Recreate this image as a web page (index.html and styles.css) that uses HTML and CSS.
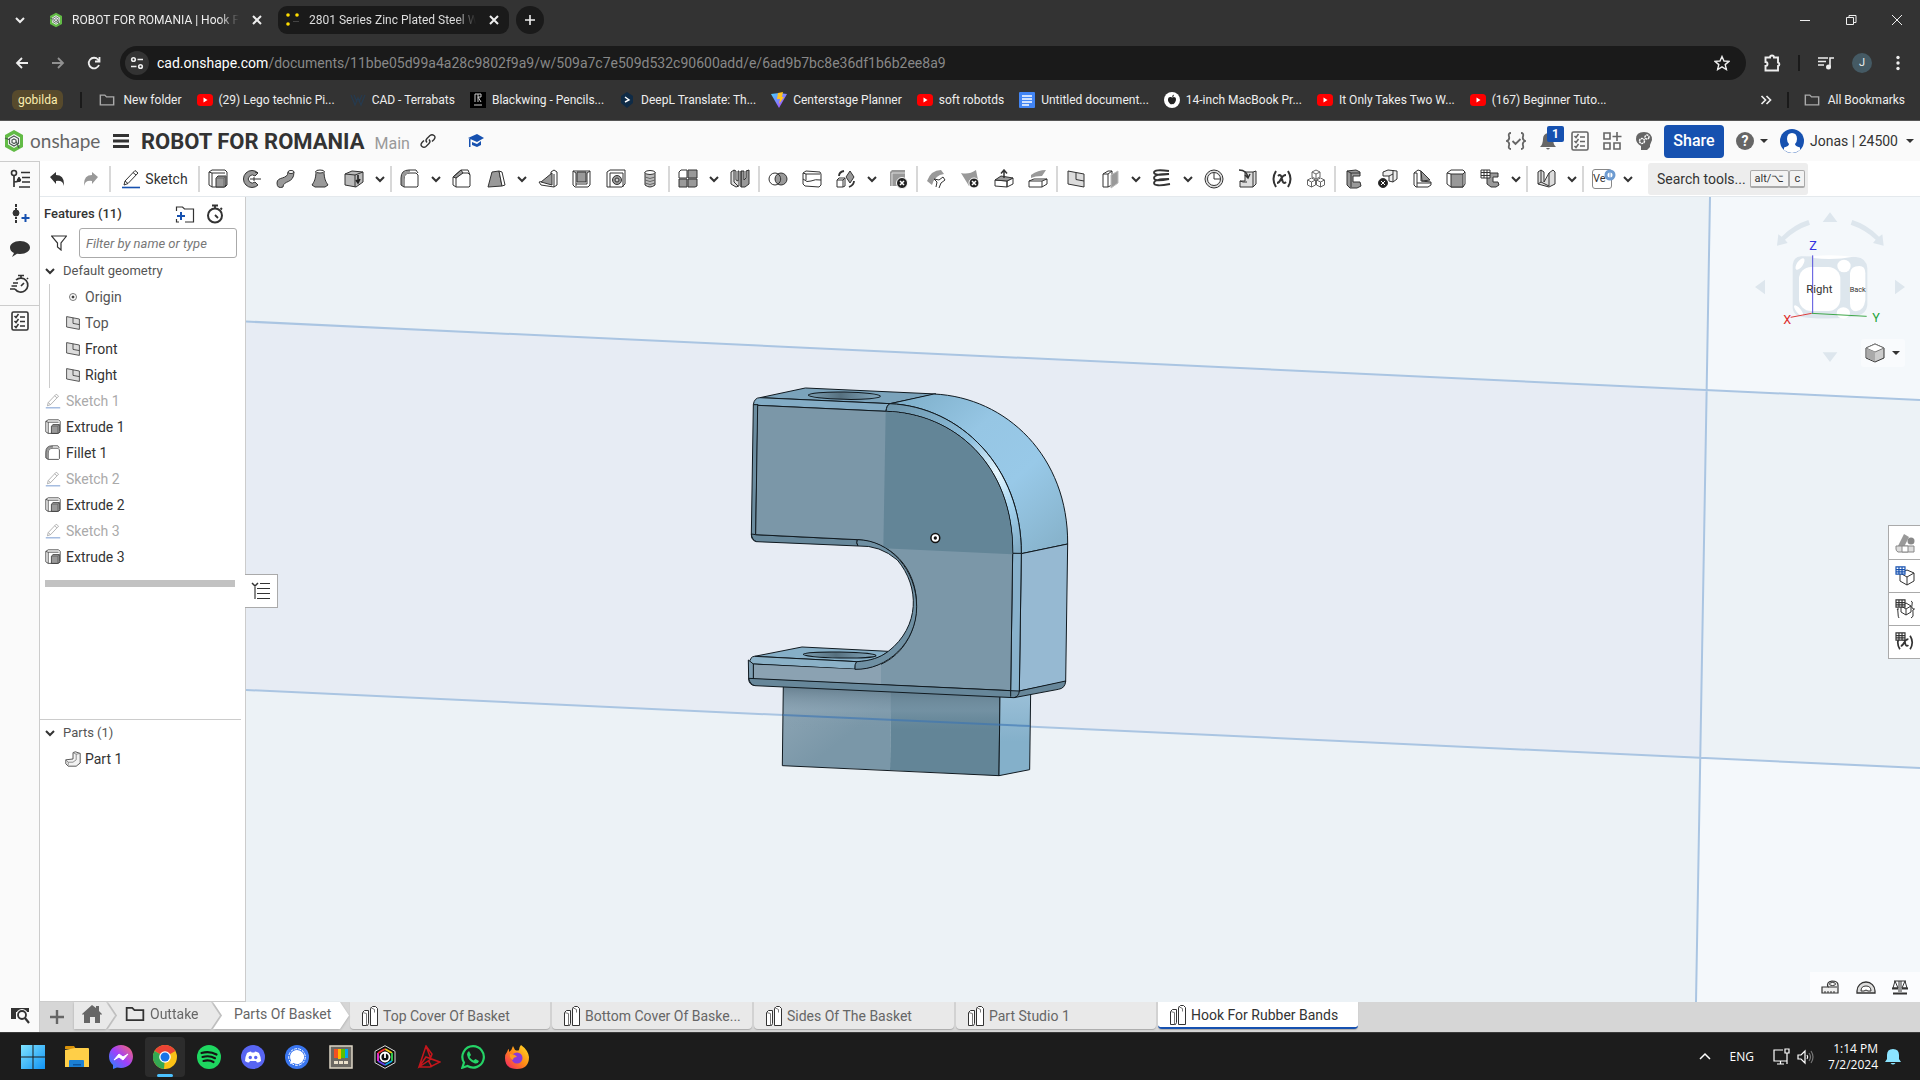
FILE: index.html
```html
<!DOCTYPE html>
<html lang="en">
<head>
<meta charset="utf-8">
<title>ROBOT FOR ROMANIA | Hook For Rubber Bands</title>
<link rel="stylesheet" href="styles.css">
</head>
<body>
<svg class="defs" aria-hidden="true">
  <defs>
    <linearGradient id="gWin" x1="0" y1="0" x2="1" y2="1"><stop offset="0" stop-color="#7fe3ff"/><stop offset="1" stop-color="#1093f5"/></linearGradient>
    <linearGradient id="gMsg" x1="0" y1="1" x2="1" y2="0"><stop offset="0" stop-color="#1a8cff"/><stop offset=".5" stop-color="#a040fa"/><stop offset="1" stop-color="#ff6a68"/></linearGradient>
    <linearGradient id="gFox" x1="1" y1="0" x2="0" y2="1"><stop offset="0" stop-color="#ffe226"/><stop offset=".5" stop-color="#ff8a16"/><stop offset="1" stop-color="#f3186e"/></linearGradient>
    <linearGradient id="gVite" x1="0" y1="0" x2="1" y2="1"><stop offset="0" stop-color="#41d1ff"/><stop offset="1" stop-color="#bd34fe"/></linearGradient>
  </defs>
  <symbol id="chev" viewBox="0 0 12 12"><path d="M2 4l4 4 4-4" fill="none" stroke-width="2"/></symbol>
  <symbol id="tri" viewBox="0 0 12 12"><path d="M2 4h8l-4 4z" fill="#333" stroke="none"/></symbol>
  <symbol id="x" viewBox="0 0 12 12"><path d="M2 2l8 8M10 2l-8 8" stroke-width="2"/></symbol>
  <symbol id="onshape" viewBox="0 0 20 24"><path d="M10 1l9 5v12l-9 5-9-5V6z" fill="#62bb46" stroke="none"/><path d="M10 5l6 3.500v7L10 19l-6-3.500v-7z" fill="#fafafa" stroke="none"/><path d="M10 7l4.500 2.500v5L10 17l-4.500-2.500v-5zM10 10l2 1v2.500l-2 1-2-1V11zM1 9l5 2M12 12l3 7" fill="none" stroke="#4d5a52" stroke-width="1.200"/></symbol>
  <symbol id="folder" viewBox="0 0 18 16"><path d="M1.500 2.500h5l2 2h8v9h-15z" stroke-width="1.600" fill="none"/></symbol>
  <symbol id="yt" viewBox="0 0 16 16"><rect y="2" width="16" height="12" rx="3.500" fill="#f00" stroke="none"/><path d="M6.500 5.500v5l4-2.500z" fill="#fff" stroke="none"/></symbol>
  <symbol id="plane" viewBox="0 0 20 20"><path d="M2 2l16 3v13L2 15z" fill="#dcdcdc"/><path d="M10 3.500v7l8 1.500" fill="none"/></symbol>
  <symbol id="extrude" viewBox="0 0 20 20"><path d="M1 3l3-2h13l2 2v13l-2 2H4l-3-2z" fill="#fff"/><path d="M4 18V4h13M1 3l3 1" fill="none"/><path class="g" d="M8 9l2-2h8v9l-2 2H8z"/><path d="M8 9h8v9M16 9l2-2" fill="none" stroke="#666"/></symbol>
  <symbol id="fillet" viewBox="0 0 20 20"><path d="M4 18V10q0-6 6-6h6l2 2v11l-1 1z" fill="#fff"/><path class="g" d="M1 16V9q0-7 8-8h1v3q-6 0-6 6v8z" stroke="none"/><path d="M4 18l-3-2V9q0-8 8-8h7l2 3" fill="none"/></symbol>
  <symbol id="pencil" viewBox="0 0 20 20"><path d="M4 12L14 1.500l3 2.500L7 14.500l-4 1.500zM4 12l3 2.500M12 3.500l3 2.500" fill="none"/><path d="M1 18.500h18" stroke="#1651b0" stroke-width="1.600"/></symbol>
  <symbol id="revolve" viewBox="0 0 20 20"><path class="g" d="M16 4A8.500 8.500 0 1 0 16 16l-3-3a4 4 0 1 1 0-6z"/><path d="M13 7l3-3-3-1M8 10h11M12 8v4" fill="none"/></symbol>
  <symbol id="sweep" viewBox="0 0 20 20"><path class="g" d="M1 14c0-7 11-3 11-11h6c0 12-11 8-11 15q-6 2-6-4z"/><ellipse cx="15" cy="3" rx="3" ry="1.500" fill="#fff"/></symbol>
  <symbol id="loft" viewBox="0 0 20 20"><path class="g" d="M6 2h8c0 8 2 11 4 14l-3 2H5l-3-2c2-3 4-6 4-14z"/><ellipse cx="10" cy="2.500" rx="4" ry="1.500" fill="#fff"/></symbol>
  <symbol id="thicken" viewBox="0 0 20 20"><path d="M1 5l7-3 11 1v10l-7 5-11-2z" fill="#bbb"/><path d="M1 5l10 1 8-3M11 6v12" fill="none"/><path d="M14 6v8m-2-3l2 3 2-4" stroke="#222" stroke-width="1.600" fill="none"/></symbol>
  <symbol id="chamfer" viewBox="0 0 20 20"><path d="M4 18v-9l6-5h6l2 2v11l-1 1z" fill="#fff"/><path class="g" d="M1 8l8-7 2 3-7 5z"/><path d="M4 18l-3-2V8l8-7h7l2 5" fill="none"/></symbol>
  <symbol id="draft" viewBox="0 0 20 20"><path class="g" d="M6 3l7-1 3 15-14 1z"/><path d="M13 2l3 1 3 13-3 1z" fill="#fff"/></symbol>
  <symbol id="rib" viewBox="0 0 20 20"><path d="M13 3l3-2 3 2v13l-3 2-13-2-2-3 12-2z" fill="#fff"/><path class="g" d="M3 13L14 4v12z"/><path d="M16 18V5" fill="none"/></symbol>
  <symbol id="shell" viewBox="0 0 20 20"><path d="M1 2h17v14l-2 2H3l-2-2z" fill="#fff"/><path class="g" d="M5 3h9v10H5z"/><path d="M1 2l3 2v13M18 2l-3 2v11H4" fill="none"/></symbol>
  <symbol id="hole" viewBox="0 0 20 20"><path d="M1 3l3-2h15v14l-3 3H1z" fill="#fff"/><path d="M4 4h13v14M4 4v14" fill="none"/><circle class="g" cx="11" cy="11" r="4.500"/><circle cx="11" cy="11" r="2" fill="#ccc"/></symbol>
  <symbol id="thread" viewBox="0 0 20 20"><path d="M5 3v13q5 4 10 0V3z" fill="#bbb"/><ellipse cx="10" cy="3.500" rx="5" ry="2" fill="#fff"/><path d="M5 8q5 3 10 0M5 11q5 3 10 0M5 14q5 3 10 0" fill="none" stroke="#666"/></symbol>
  <symbol id="pattern" viewBox="0 0 20 20"><path d="M1 3l2-2h6v8H1z" fill="#fff"/><path class="g" d="M10 1h9v8h-9zM1 10h8v8H1zM10 10h9v7l-2 1h-7z"/></symbol>
  <symbol id="mirror" viewBox="0 0 20 20"><path d="M1 3l3-2 2 1v9l2 1V2h1v15l-3 1-5-3z" fill="#ddd"/><path class="g" d="M11 2h3v9l2-2V2l3-1v14l-4 3h-4z"/><path d="M4 1v12l4 4M11 2v16" fill="none"/></symbol>
  <symbol id="boolean" viewBox="0 0 20 20"><circle cx="7" cy="10" r="6" fill="#fff"/><circle class="g" cx="13" cy="10" r="6"/><path d="M10 5a6 6 0 0 1 0 10" fill="none"/></symbol>
  <symbol id="split" viewBox="0 0 20 20"><path d="M1 4l3-2 14 1 1 2v11l-2 2-14-1-2-2z" fill="#fff"/><path d="M1 4l3 1 14 0M1 10q4 4 8 2t10-1M4 5v6" fill="none"/></symbol>
  <symbol id="transform" viewBox="0 0 20 20"><path d="M1 11l2-2h6v8l-2 1H1zM1 11h6v7M7 11l2-2" fill="#fff"/><path class="g" d="M14 2l4 6-4 6-4-6z"/><path d="M3 7q0-4 5-5M18 12q0 4-5 6" fill="none" stroke-width="1.800"/></symbol>
  <symbol id="delpart" viewBox="0 0 20 20"><path class="g" d="M2 3l2-2h13v14l-2 2H2z" stroke="none"/><path d="M4 17V4h13" stroke="#ddd" fill="none"/><circle cx="14" cy="14" r="5.500" fill="#222" stroke="#fff"/><path d="M12 12l4 4M16 12l-4 4" stroke="#fff" stroke-width="1.500"/></symbol>
  <symbol id="modfil" viewBox="0 0 20 20"><path class="g" d="M1 12q4-11 14-11l3 4Q9 6 6 16z" stroke="none"/><path d="M8 10l5 1 4-3 2 3-4 3-2 5M8 10l3 3-1 5" fill="#fff"/></symbol>
  <symbol id="delface" viewBox="0 0 20 20"><path class="g" d="M1 4q8 2 15-3l2 10-9 6z" stroke="none"/><circle cx="14" cy="14" r="5" fill="#222" stroke="#fff"/><path d="M12 12l4 4M16 12l-4 4" stroke="#fff" stroke-width="1.500"/></symbol>
  <symbol id="moveface" viewBox="0 0 20 20"><path d="M1 11v6l12 1 6-3v-6L13 12z" fill="#fff"/><path class="g" d="M1 11l6-4 12 2-6 3z"/><path d="M13 12v6M10 9V2M7 4.500L10 1l3 3.500" fill="none" stroke-width="1.500"/></symbol>
  <symbol id="replface" viewBox="0 0 20 20"><path class="g" d="M3 6q7-5 15-5l-4 6q-7 0-11 2z" stroke="none"/><path d="M1 12l5-2h13v5l-5 3H1zM1 12h13l5-2M14 12v6" fill="#fff"/></symbol>
  <symbol id="surface" viewBox="0 0 20 20"><path d="M3 5l5-3h4v14l-4 2H3z" fill="#fff"/><path d="M3 5h5v13M8 5l4-3" fill="none"/><path class="g" d="M11 6l7-4v12l-7 5z" stroke="#bbb"/></symbol>
  <symbol id="helix" viewBox="0 0 20 20"><path d="M17 2Q2 0 2 3.500T17 5Q2 5 2 9t15 1Q2 10 2 14t16 1" fill="none" stroke-width="1.800"/></symbol>
  <symbol id="variable" viewBox="0 0 20 20"><path d="M4 2q-5 8 0 16M16 2q5 8 0 16M6 7q3-3 4 3t4 3M14 6q-3 0-5 4t-4 4" fill="none" stroke-width="2"/></symbol>
  <symbol id="clock" viewBox="0 0 20 20"><circle cx="10" cy="10" r="9" fill="#ddd"/><circle cx="10" cy="10" r="6.500" fill="#fff"/><path d="M10 4v6h6" fill="none"/></symbol>
  <symbol id="derived" viewBox="0 0 20 20"><path d="M7 3h8l3-1v13l-3 3H2v-6h5z" fill="#ddd"/><path d="M15 3v15M2 12l3 1h4" fill="none"/><path d="M1 1q8 0 9 8M7 6l3 3 2-4" fill="none" stroke-width="1.500"/></symbol>
  <symbol id="composite" viewBox="0 0 20 20"><path d="M10 1l4 2v5l-4 2-4-2V3zM5.500 9l4 2v5l-4 2-4-2v-5zM14.500 9l4 2v5l-4 2-4-2v-5zM6 3l4 2 4-2M10 5v5M1.500 11l4 2 4-2 1 0 4 2 4-2M5.500 13v5M14.500 13v5" fill="#fff" stroke="#666"/></symbol>
  <symbol id="frame" viewBox="0 0 20 20"><path class="g" d="M3 2l9-1 4 2v4H9v6h7l1 4-4 2H6l-3-3z"/><path d="M3 2l4 2h9M7 4v14" fill="none"/></symbol>
  <symbol id="trim" viewBox="0 0 20 20"><path d="M5 3l5-2 9 1v8l-4 3-4-1v-5H5z" fill="#eee"/><path d="M11 7l4-2V1M15 5v8" fill="none"/><circle cx="5" cy="14" r="4.500" fill="#222"/><path d="M3 12l4 4M7 12l-4 4" stroke="#fff"/></symbol>
  <symbol id="gusset" viewBox="0 0 20 20"><path d="M2 4l4-3 3 1v10l10 1v3l-3 2H4l-2-2z" fill="#fff"/><path class="g" d="M9 2l9 9-8 1z"/><path d="M5 18V4L2 4M5 14h14" fill="none"/></symbol>
  <symbol id="block" viewBox="0 0 20 20"><path d="M1 4l4-3h12l2 2v12l-2 3H5l-4-3z" fill="#fff"/><path class="g" d="M5 5h12v13H5z"/><path d="M1 4l4 1M17 5l2-2" fill="none"/></symbol>
  <symbol id="cutlist" viewBox="0 0 20 20"><path class="g" d="M7 4h11v4h-5v5h5l1 3-3 2h-5l-4-3z"/><path d="M1 1h9v8H1zM1 3.500h9M1 6.500h9M4 1v8M7 1v8" fill="#fff"/></symbol>
  <symbol id="sheet" viewBox="0 0 20 20"><path d="M2 3l3-2 3 2v10l5-9 4-3 2 2v12l-6 3-11-3z" fill="#ddd"/><path d="M5 1v12l8 4V4M5 13l-3 2" fill="none"/></symbol>
  <symbol id="parts" viewBox="0 0 18 22"><path d="M1.500 7.500l2-2h4v13l-1 2h-5z" fill="#fff"/><path d="M9.500 3.500l2-2h3l2 2v17h-7z" fill="#fff"/><path d="M1.500 7.500l4 1v12M9.500 2.500l4 2v3" fill="none" stroke="#777"/></symbol>
  <symbol id="checklist" viewBox="0 0 20 20"><rect x="2" y="1" width="16" height="18" rx="1.500" fill="none" stroke-width="1.600"/><path d="M4.500 5l1.500 1.500L8.500 3M4.500 10l1.500 1.500L8.500 8M4.500 15l1.500 1.500L8.500 13M10 6h5M10 10.500h5M10 15h5" fill="none" stroke-width="1.500"/></symbol>
  <symbol id="stopwatch" viewBox="0 0 20 20"><circle cx="10" cy="11.500" r="7" fill="none" stroke-width="2"/><path d="M7 1.500h6M10 1.500V4M15.500 4l1.500 1.500M10 11l3 3" fill="none" stroke-width="1.800"/></symbol>
  <symbol id="grid" viewBox="0 0 12 10"><path d="M1 1h10v8H1zM1 4h10M1 6.500h10M4.300 1v8M7.700 1v8" fill="#fff" stroke-width="1.300"/></symbol>
</svg>

<header class="browser">
  <div class="tabstrip">
    <button class="plain tabsearch" aria-label="Search tabs"><svg class="s12"><use href="#chev"/></svg></button>
    <div class="btab"><svg class="s16"><use href="#onshape"/></svg><span class="bt">ROBOT FOR ROMANIA | Hook For Rubber Bands</span><button class="plain" aria-label="Close tab"><svg class="s12"><use href="#x"/></svg></button></div>
    <div class="btab dark"><svg class="s16" viewBox="0 0 16 16"><g stroke="none"><circle cx="3" cy="3" r="1.800" fill="#fd0"/><circle cx="12" cy="3" r="1.800" fill="#fd0"/><circle cx="3" cy="12" r="1.800" fill="#fd0"/><path d="M8 9h6v1H8z" fill="#444"/></g></svg><span class="bt">2801 Series Zinc Plated Steel Washer</span><button class="plain" aria-label="Close tab"><svg class="s12"><use href="#x"/></svg></button></div>
    <button class="newtab" aria-label="New tab"><svg class="s12" viewBox="0 0 12 12"><path d="M6 1v10M1 6h10" stroke-width="1.600"/></svg></button>
    <div class="winctl">
      <button class="plain" aria-label="Minimize"><svg class="s12" viewBox="0 0 12 12"><path d="M1 6.500h10"/></svg></button>
      <button class="plain" aria-label="Restore"><svg class="s12" viewBox="0 0 12 12"><path d="M1.500 3.500h7v7h-7zM4 3.500v-2h7v7H8.500" fill="none"/></svg></button>
      <button class="plain" aria-label="Close"><svg class="s12" viewBox="0 0 12 12"><path d="M1 1l10 10M11 1L1 11"/></svg></button>
    </div>
  </div>
  <div class="urlrow">
    <button class="plain nav" aria-label="Back"><svg class="s16" viewBox="0 0 16 16"><path d="M14 8H3M8 3L3 8l5 5" fill="none" stroke-width="1.800"/></svg></button>
    <button class="plain nav dim" aria-label="Forward"><svg class="s16" viewBox="0 0 16 16"><path d="M2 8h11M8 3l5 5-5 5" fill="none" stroke-width="1.800"/></svg></button>
    <button class="plain nav" aria-label="Reload"><svg class="s16" viewBox="0 0 16 16"><path d="M13 10a5.300 5.300 0 1 1-1-5.500L13.500 6M13.500 2v4.500H9" fill="none" stroke-width="1.800"/></svg></button>
    <div class="urlbar">
      <button class="site" aria-label="Site information"><svg class="s16" viewBox="0 0 16 16"><g fill="none" stroke-width="1.600"><circle cx="4.500" cy="4.500" r="1.800"/><path d="M8.500 4.500H14M2 11.500h5.500"/><circle cx="11.500" cy="11.500" r="1.800"/></g></svg></button>
      <p class="url"><b>cad.onshape.com</b>/documents/11bbe05d99a4a28c9802f9a9/w/509a7c7e509d532c90600add/e/6ad9b7bc8e36df1b6b2ee8a9</p>
      <button class="plain star" aria-label="Bookmark"><svg class="s16" viewBox="0 0 16 16"><path d="M8 1.500l2 4.500 5 .4-3.800 3.200 1.200 4.900L8 11.900l-4.400 2.600 1.200-4.900L1 6.400 6 6z" fill="none" stroke-width="1.400"/></svg></button>
    </div>
    <button class="plain" aria-label="Extensions"><svg class="s20" viewBox="0 0 20 20"><path d="M3.500 4.500H8a2 2 0 0 1 4 0h4v5a1.800 1.800 0 0 1 0 3.500v4.500h-12.500v-4.500a2 2 0 0 0 0-4z" fill="none" stroke-width="1.900"/></svg></button>
    <i class="bsep"></i>
    <button class="plain" aria-label="Media"><svg class="s16" viewBox="0 0 16 16"><path d="M0 3h10M0 6.500h8M0 10h6M12 12V3h4" fill="none" stroke-width="1.600"/><circle cx="10.500" cy="12" r="2.500" fill="#eee" stroke="none"/></svg></button>
    <button class="profile">J</button>
    <button class="plain" aria-label="Menu"><svg class="s16" viewBox="0 0 16 16"><g fill="#eee" stroke="none"><circle cx="8" cy="2.500" r="1.700"/><circle cx="8" cy="8" r="1.700"/><circle cx="8" cy="13.500" r="1.700"/></g></svg></button>
  </div>
  <nav class="bookmarks">
    <a href="#" class="group">gobilda</a><i class="bsep"></i>
    <a href="#"><svg class="s16 fold"><use href="#folder"/></svg>New folder</a>
    <a href="#"><svg class="s16"><use href="#yt"/></svg>(29) Lego technic Pi...</a>
    <a href="#"><svg class="s16" viewBox="0 0 16 16"><path d="M1 3l4 10 3-7 3 7 4-10M4 3l3 7M12 3L9 10" fill="none" stroke="#263a4e" stroke-width="1.300"/></svg>CAD - Terrabats</a>
    <a href="#"><svg class="s16" viewBox="0 0 16 16"><path d="M0 0h16v16H0z" fill="#000" stroke="none"/><path d="M5 10V2h3v8M8 2h3v3H8l3 5M4 13h8" fill="none" stroke="#ccc"/></svg>Blackwing - Pencils...</a>
    <a href="#"><svg class="s16" viewBox="0 0 16 16"><path d="M8 0l6 4v7l-6 5-6-5V4z" fill="#0f2b46" stroke="none"/><path d="M6 5l4 3-4 2" fill="none" stroke="#fff" stroke-width="1.400"/></svg>DeepL Translate: Th...</a>
    <a href="#"><svg class="s16" viewBox="0 0 16 16"><path d="M0 2l8-1 8 1-8 14z" fill="url(#gVite)" stroke="none"/><path d="M7 1l5-1-1 5h2l-5 7 1-5H6z" fill="#ffc31f" stroke="none"/></svg>Centerstage Planner</a>
    <a href="#"><svg class="s16"><use href="#yt"/></svg>soft robotds</a>
    <a href="#"><svg class="s16" viewBox="0 0 16 16"><rect width="16" height="16" rx="1" fill="#4285f4" stroke="none"/><path d="M3 4h10M3 7h10M3 10h10M3 13h7" stroke="#fff" stroke-width="1.500"/></svg>Untitled document...</a>
    <a href="#"><svg class="s16" viewBox="0 0 16 16"><circle cx="8" cy="8" r="8" fill="#fff" stroke="none"/><path d="M8 5.500c4-2 5 2 3 5s-2 1-3 1.500-1 1-3-1.500-1-7 3-5zM8 5q0-2 2-2.500Q10 5 8 5z" fill="#222" stroke="none"/></svg>14-inch MacBook Pr...</a>
    <a href="#"><svg class="s16"><use href="#yt"/></svg>It Only Takes Two W...</a>
    <a href="#"><svg class="s16"><use href="#yt"/></svg>(167) Beginner Tuto...</a>
    <button class="plain more" aria-label="More bookmarks"><svg class="s12" viewBox="0 0 12 12"><path d="M1.500 2l4 4-4 4M6.500 2l4 4-4 4" fill="none" stroke-width="1.700"/></svg></button><i class="bsep"></i>
    <a href="#"><svg class="s16 fold"><use href="#folder"/></svg>All Bookmarks</a>
  </nav>
</header>

<div class="app">
  <header class="dochead">
    <a class="logo" href="#"><svg viewBox="0 0 20 24"><use href="#onshape"/></svg>onshape</a>
    <button class="plain burger" aria-label="Main menu"><svg class="s16" viewBox="0 0 16 16"><path d="M0 2.500h16M0 8h16M0 13.500h16" stroke-width="3"/></svg></button>
    <h1>ROBOT FOR ROMANIA</h1><span class="branch">Main</span>
    <button class="plain link" aria-label="Copy link"><svg class="s16" viewBox="0 0 16 16"><path d="M7 9.500q-2-2 0-4l3-3q2-1.500 4 0t0 4L12 8.500M9 6.500q2 2 0 4l-3 3q-2 1.500-4 0t0-4L4 7.500" fill="none" stroke-width="1.400"/></svg></button>
    <button class="plain cap" aria-label="Education"><svg class="s16" viewBox="0 0 16 16"><path d="M0 5l9-4 7 4-7 4zM4 9l5 2 4-3v4l-4 2-5-2zM1 6h1.500v8H1z" fill="#1651b0" stroke="none"/></svg></button>
    <div class="headright">
      <button class="plain" aria-label="Validate"><svg class="s20" viewBox="0 0 20 20"><path d="M5 2Q2 2 3 5.500T0.500 10Q4 11 3 14.500T5 18M15 2q3 0 2 3.500t2.500 4.500Q16 11 17 14.500T15 18M6.500 10l3 3 5-5" fill="none" stroke="#666" stroke-width="1.800"/></svg></button>
      <button class="plain bell" aria-label="Notifications"><svg class="s20" viewBox="0 0 20 20"><path d="M2 16q3-3 3-8 0-5 5-6 5 1 5 6 0 5 3 8zM8 17h4q-2 3-4 0z" fill="#666" stroke="none"/></svg><em>1</em></button>
      <button class="plain gray" aria-label="Tasks"><svg class="s20"><use href="#checklist"/></svg></button>
      <button class="plain" aria-label="App store"><svg class="s20" viewBox="0 0 20 20"><path d="M2 2h6v6H2zM2 12h6v6H2zM12 12h6v6h-6zM15 1v9M10.500 5.500h9" fill="none" stroke="#666" stroke-width="1.600"/></svg></button>
      <button class="plain" aria-label="Learning"><svg class="s20" viewBox="0 0 20 20"><path d="M10 1q8 0 8 8l-2 5v2l-3 3H7v-4Q2 12 2 8q0-7 8-7z" fill="#666" stroke="none"/><g fill="none" stroke="#fff" stroke-width="1.500"><circle cx="8" cy="10" r="2.500" stroke-dasharray="2 .6"/><circle cx="13" cy="6" r="2" stroke-dasharray="2 .6"/></g></svg></button>
      <button class="share">Share</button>
      <button class="plain help" aria-label="Help"><b>?</b><svg class="s12"><use href="#tri"/></svg></button>
      <button class="plain user"><svg viewBox="0 0 24 24"><circle cx="12" cy="12" r="12" fill="#1651b0" stroke="none"/><path d="M12 4q5 0 5 6 0 3-2 5 0 2 5 3.500v2.500q-8 6-16 0V18.500Q9 17 9 15q-2-2-2-5 0-6 5-6z" fill="#fff" stroke="none"/></svg>Jonas | 24500<svg class="s12"><use href="#tri"/></svg></button>
    </div>
  </header>

  <div class="work">
    <nav class="rail">
      <button class="plain" aria-label="Feature list"><svg viewBox="0 0 20 20"><circle cx="4" cy="4" r="2.500" fill="none" stroke-width="1.600"/><path d="M4 7v11M4 13q5 0 5-3v-2M11 3.500h9M12 8.500h8M12 13h8M9 18h11" fill="none" stroke-width="1.700"/><circle cx="9" cy="11" r="1.700" fill="#333"/></svg></button>
      <button class="plain" aria-label="Insert version"><svg viewBox="0 0 20 20"><circle cx="6" cy="9" r="3" fill="#333"/><path d="M6 0v3M6 4v2M6 13v2M6 16v3" stroke-width="2"/><path d="M15.500 10v8M11.500 14h8" stroke="#1651b0" stroke-width="2"/></svg></button>
      <button class="plain" aria-label="Comments"><svg viewBox="0 0 20 20"><path d="M10 2c6 0 10 3 10 6.500S16 15 10 15l-3-.3L2 18l2-4Q0 12 0 8.500C0 5 4 2 10 2z" fill="#333" stroke="none"/></svg></button>
      <button class="plain" aria-label="History"><svg viewBox="0 0 20 20"><path d="M6 6a7 7 0 1 1-1 9M8 1.500h6M11 1.500V4M17 4l1 1M11 12l3-3M3 9h5M1.500 12H7M0 15h5" fill="none" stroke-width="1.700"/></svg></button>
      <hr>
      <button class="plain" aria-label="Tasks"><svg viewBox="0 0 20 20"><use href="#checklist"/></svg></button>
      <button class="plain find" aria-label="Find tab"><svg viewBox="0 0 20 20"><path d="M1 3h18v4H1zM1 3h5v11H1z" fill="#333" stroke="none"/><circle cx="12" cy="10" r="6" fill="#fafafa" stroke="none"/><circle cx="12" cy="10" r="4" fill="none" stroke-width="1.800"/><path d="M15 13l4 5" stroke-width="2.200"/></svg></button>
    </nav>

    <div class="studio">
      <div class="toolbar">
        <button aria-label="Undo"><svg viewBox="0 0 20 20"><path d="M3 8l6-5v3q8 0 8 9v2q-1-6-8-5v3z" fill="#333" stroke="none"/></svg></button>
        <button aria-label="Redo"><svg viewBox="0 0 20 20"><path d="M17 8l-6-5v3q-8 0-8 9v2q1-6 8-5v3z" fill="#999" stroke="none"/></svg></button><i></i>
        <button class="sketch"><svg viewBox="0 0 20 20"><use href="#pencil"/></svg>Sketch</button><i></i>
        <button aria-label="Extrude"><svg><use href="#extrude"/></svg></button>
        <button aria-label="Revolve"><svg><use href="#revolve"/></svg></button>
        <button aria-label="Sweep"><svg><use href="#sweep"/></svg></button>
        <button aria-label="Loft"><svg><use href="#loft"/></svg></button>
        <button aria-label="Thicken"><svg><use href="#thicken"/></svg></button>
        <button class="dd" aria-label="More"><svg><use href="#chev"/></svg></button><i></i>
        <button aria-label="Fillet"><svg><use href="#fillet"/></svg></button>
        <button class="dd" aria-label="More"><svg><use href="#chev"/></svg></button>
        <button aria-label="Chamfer"><svg><use href="#chamfer"/></svg></button>
        <button aria-label="Draft"><svg><use href="#draft"/></svg></button>
        <button class="dd" aria-label="More"><svg><use href="#chev"/></svg></button>
        <button aria-label="Rib"><svg><use href="#rib"/></svg></button>
        <button aria-label="Shell"><svg><use href="#shell"/></svg></button>
        <button aria-label="Hole"><svg><use href="#hole"/></svg></button>
        <button aria-label="Thread"><svg><use href="#thread"/></svg></button><i></i>
        <button aria-label="Pattern"><svg><use href="#pattern"/></svg></button>
        <button class="dd" aria-label="More"><svg><use href="#chev"/></svg></button>
        <button aria-label="Mirror"><svg><use href="#mirror"/></svg></button><i></i>
        <button aria-label="Boolean"><svg><use href="#boolean"/></svg></button>
        <button aria-label="Split"><svg><use href="#split"/></svg></button>
        <button aria-label="Transform"><svg><use href="#transform"/></svg></button>
        <button class="dd" aria-label="More"><svg><use href="#chev"/></svg></button>
        <button aria-label="Delete part"><svg><use href="#delpart"/></svg></button><i></i>
        <button aria-label="Modify fillet"><svg><use href="#modfil"/></svg></button>
        <button aria-label="Delete face"><svg><use href="#delface"/></svg></button>
        <button aria-label="Move face"><svg><use href="#moveface"/></svg></button>
        <button aria-label="Replace face"><svg><use href="#replface"/></svg></button><i></i>
        <button aria-label="Plane"><svg><use href="#plane"/></svg></button>
        <button aria-label="Surface"><svg><use href="#surface"/></svg></button>
        <button class="dd" aria-label="More"><svg><use href="#chev"/></svg></button>
        <button aria-label="Helix"><svg><use href="#helix"/></svg></button>
        <button class="dd" aria-label="More"><svg><use href="#chev"/></svg></button>
        <button aria-label="Mate connector"><svg><use href="#clock"/></svg></button>
        <button aria-label="Derived"><svg><use href="#derived"/></svg></button>
        <button aria-label="Variable"><svg><use href="#variable"/></svg></button>
        <button aria-label="Composite part"><svg><use href="#composite"/></svg></button><i></i>
        <button aria-label="Frame"><svg><use href="#frame"/></svg></button>
        <button aria-label="Trim"><svg><use href="#trim"/></svg></button>
        <button aria-label="Gusset"><svg><use href="#gusset"/></svg></button>
        <button aria-label="End cap"><svg><use href="#block"/></svg></button>
        <button aria-label="Cut list"><svg><use href="#cutlist"/></svg></button>
        <button class="dd" aria-label="More"><svg><use href="#chev"/></svg></button><i></i>
        <button aria-label="Sheet metal"><svg><use href="#sheet"/></svg></button>
        <button class="dd" aria-label="More"><svg><use href="#chev"/></svg></button><i></i>
        <button class="custom" aria-label="Custom feature"><span>Ve</span><svg viewBox="0 0 12 12"><circle cx="6" cy="6" r="4" fill="#fff" stroke="#6d9bd1" stroke-width="3"/><path d="M6 2v8" stroke="#6d9bd1"/></svg></button>
        <button class="dd" aria-label="More"><svg><use href="#chev"/></svg></button>
        <button class="search"><span>Search tools...</span><kbd>alt/⌥</kbd><kbd>c</kbd></button>
      </div>

      <div class="main">
        <aside class="panel">
          <div class="phead"><h2>Features (11)</h2>
            <button class="plain" aria-label="Add folder"><svg class="s20" viewBox="0 0 20 20"><path d="M1.500 7V3h6l2 2h9v13H10M1.500 15v3H4" fill="none" stroke-width="1.200"/><path d="M6 8v8M2 12h8" stroke="#1651b0" stroke-width="2"/></svg></button>
            <button class="plain" aria-label="Rebuild times"><svg class="s20"><use href="#stopwatch"/></svg></button></div>
          <div class="pfilter"><svg class="s16" viewBox="0 0 16 16"><path d="M.5 1h15L10 8v7L6.500 12V8z" fill="none" stroke-width="1.200"/></svg>
            <input type="text" placeholder="Filter by name or type" aria-label="Filter by name or type"></div>
          <ul class="tree">
            <li class="head"><svg class="s12"><use href="#chev"/></svg>Default geometry
              <ul>
                <li class="soft"><svg viewBox="0 0 16 16"><circle cx="8" cy="8" r="3.500" fill="none" stroke="#777"/><circle cx="8" cy="8" r="1" fill="#333"/></svg>Origin</li>
                <li class="soft"><svg><use href="#plane"/></svg>Top</li>
                <li><svg><use href="#plane"/></svg>Front</li>
                <li><svg><use href="#plane"/></svg>Right</li>
              </ul></li>
            <li class="off"><svg><use href="#pencil"/></svg>Sketch 1</li>
            <li><svg><use href="#extrude"/></svg>Extrude 1</li>
            <li><svg><use href="#fillet"/></svg>Fillet 1</li>
            <li class="off"><svg><use href="#pencil"/></svg>Sketch 2</li>
            <li><svg><use href="#extrude"/></svg>Extrude 2</li>
            <li class="off"><svg><use href="#pencil"/></svg>Sketch 3</li>
            <li><svg><use href="#extrude"/></svg>Extrude 3</li>
          </ul>
          <div class="rollback"></div>
          <ul class="tree parts">
            <li class="head"><svg class="s12"><use href="#chev"/></svg>Parts (1)
              <ul><li><svg viewBox="0 0 20 20"><path d="M1 11l9-1V2l3-1 6 2v12l-5 4H4l-3-3z" fill="#f2f2f2"/><path d="M10 2l4 2v7l-4 3H4l-3-3M14 4l5-1M4 14v4" fill="none" stroke="#777"/></svg>Part 1</li></ul></li>
          </ul>
        </aside>

        <section class="canvas">
          <svg class="scene" viewBox="246 197 1674 805" preserveAspectRatio="xMidYMid slice" stroke="none">
            <defs>
              <linearGradient id="hi" gradientUnits="userSpaceOnUse" x1="510" y1="140" x2="890" y2="580"><stop offset="0" stop-color="#6f97ad"/><stop offset=".4" stop-color="#8fc0de"/><stop offset=".62" stop-color="#e6f7ff"/><stop offset=".8" stop-color="#a3d2ee"/><stop offset="1" stop-color="#7fa9c2"/></linearGradient>
              <linearGradient id="arc" gradientUnits="userSpaceOnUse" x1="560" y1="100" x2="980" y2="570"><stop offset="0" stop-color="#7fb0cb"/><stop offset=".35" stop-color="#96c6e4"/><stop offset=".65" stop-color="#98c9e8"/><stop offset="1" stop-color="#88b4cd"/></linearGradient>
              <linearGradient id="under" x1="0" y1="0" x2="0" y2="1"><stop offset="0" stop-color="#4f6878" stop-opacity=".75"/><stop offset=".3" stop-color="#8fa7b8" stop-opacity=".35"/><stop offset=".5" stop-color="#7b97a8" stop-opacity="0"/></linearGradient>
              <linearGradient id="hol" x1="0" y1="0" x2="1" y2="0"><stop offset="0" stop-color="#7c9fb3"/><stop offset=".45" stop-color="#56707f"/><stop offset="1" stop-color="#84a9bf"/></linearGradient>
              <linearGradient id="leg" x1="0" y1="0" x2="1" y2="1"><stop offset="0" stop-color="#91a8b7"/><stop offset=".6" stop-color="#7a97a8"/></linearGradient>
              <linearGradient id="side" x1="0" y1="0" x2="0" y2="1"><stop offset="0" stop-color="#9bc0d8"/><stop offset=".6" stop-color="#84b0ca"/></linearGradient>
            </defs>
            <path d="M246 197h1674v805H246z" fill="#f4f8fb"/>
            <path d="M246 197H1710L1696 1002H246z" fill="#ecf2f6"/>
            <path d="M246 321L1920 400V768L246 690z" fill="#ecf2f6"/>
            <path d="M246 321L1707 390 1700 758 246 690z" fill="#e7ecf4"/>
            <path d="M246 321.500L1920 400M246 690L1920 768M1710 197L1696 1002" stroke="#aac5e2" stroke-width="2" fill="none"/>
            <g transform="translate(720 360) scale(.33333)" stroke="#10191f" stroke-width="3" stroke-linejoin="round">
              <path d="M190 970L514 985 510 1231 187 1217z" fill="url(#leg)" stroke="none"/>
              <path d="M513 985L840 1000 837 1247 510 1231z" fill="#638597" stroke="none"/>
              <path d="M190 970L840 1000 837 1247 187 1217z" fill="url(#under)"/>
              <path d="M840 1000L932 995 929 1229 837 1247z" fill="url(#side)"/>
              <path d="M120 113L256 84 648 102 510 131z" fill="#7ba3bb"/>
              <ellipse cx="373" cy="107" rx="108" ry="11" fill="url(#hol)" transform="rotate(1 373 107)"/>
              <path d="M510 131L642 102C860 112 1045 290 1043 552L904 581C905 320 720 140 510 131z" fill="url(#arc)"/>
              <path d="M904 581L1043 552 1037 965 898 993z" fill="#96b9d2"/>
              <path d="M100 134Q103 113 120 113L510 131Q500 135 498 154L113 136z" fill="#83acc5"/>
              <path d="M510 131C720 140 905 320 904 581L878 580C880 310 700 160 498 154Q500 135 510 131z" fill="url(#hi)"/>
              <path d="M878 580H904L898 993Q895 1012 882 1012L872 990z" fill="#89b2cc"/>
              <path d="M100 134H114L107 524 110 545Q93 542 94 522z" fill="#6b8c9f"/>
              <path d="M94 522L107 524 412 539Q408 550 414 558L110 545Q96 540 94 522z" fill="#67889b"/>
              <path d="M104 889L246 861 505 874Q470 905 410 905z" fill="#86afc7"/>
              <ellipse cx="359" cy="885" rx="109" ry="9" fill="url(#hol)" transform="rotate(1 359 885)"/>
              <path d="M88 912Q90 889 104 889L410 905Q405 915 405 928L100 912z" fill="#8bb1c7"/>
              <path d="M100 912L405 928C640 930 660 560 412 539L107 524 113 136 498 154C700 160 880 310 878 580L872 992 100 957z" fill="#7b97a8"/>
              <path d="M497 155C700 162 878 310 877 583L490 565z" fill="#638597" stroke="none"/>
              <path d="M102 914L405 928Q450 929 483 911V972L102 955z" fill="#8ba2b2" stroke="none"/>
              <path d="M405 928Q403 912 410 905C450 903 480 893 505 874C600 800 600 680 532 600Q480 555 414 558Q408 548 412 539C510 540 590 630 590 740C590 850 500 930 405 928z" fill="#6f90a3"/>
              <path d="M85 900L100 912V957L105 977Q87 975 86 957z" fill="#7d9db1"/>
              <path d="M86 955L872 992 898 993 1037 963Q1036 985 1015 988L882 1013 105 977Q90 974 86 955z" fill="#67879a"/>
              <path d="M872 992V1010M898 993Q896 1010 882 1013" fill="none"/>
              <circle cx="646" cy="534" r="12" fill="#111" stroke="#111" stroke-width="7"/><circle cx="646" cy="534" r="8" fill="#111" stroke="#fff" stroke-width="6"/>
            </g>
            <path d="M783 715L1030 726" stroke="#3a74b4" stroke-width="2" opacity=".6"/>
          </svg>
          <button class="toggle" aria-label="Toggle feature list"><svg viewBox="0 0 20 20"><path d="M1 2l3 3 3-3" fill="none" stroke-width="1.500"/><path d="M4 6v12" stroke="#888" stroke-width="2"/><path d="M9 2.500h10M6 7.500h13M6 12.500h13M6 17.500h13"/></svg></button>
          <svg class="viewcube" viewBox="150 21 510 549" stroke="none" role="img" aria-label="View cube">
            <g fill="#dde6ed"><path d="M390 67l22 29h-44zM390 516l22-29h-44zM165 291l30-22v44zM615 291l-30-22v44z"/><path d="M231 167l4-34 10 7q35-36 80-50l5 14q-44 15-75 45l8 10zM551 167l-4-34-10 7q-35-36-80-50l-5 14q44 15 75 45l-8 10z"/><path d="M278 225q2-24 25-26l165 2q32 3 34 34v110q-2 25-30 33-60 12-150 5-42-2-44-28z"/></g>
            <g fill="#fff"><rect x="297" y="231" width="124" height="132" rx="36"/><path d="M450 250q2-22 28-22 18 0 18 22v80q-4 32-28 34-18 0-18-24z"/><ellipse cx="432" cy="228" rx="20" ry="19"/><ellipse cx="430" cy="369" rx="20" ry="17"/><ellipse cx="300" cy="222" rx="9" ry="20" transform="rotate(35 300 222)"/><ellipse cx="296" cy="362" rx="7" ry="20" transform="rotate(-40 296 362)"/><path d="M340 198q60-6 120 2-60 12-120 4z"/></g>
            <path d="M338 196V370" stroke="#5550dd" stroke-width="3"/><path d="M335 370L272 382" stroke="#dd3c3c" stroke-width="3"/><path d="M335 370L500 379" stroke="#3fa84a" stroke-width="3"/>
            <text x="319" y="309" font-size="34" fill="#333">Right</text><text x="449" y="305" font-size="22" fill="#333">Back</text>
            <text x="328" y="181" font-size="38" fill="#3434e0">Z</text><text x="250" y="401" font-size="38" fill="#dd2c2c">X</text><text x="517" y="396" font-size="38" fill="#22a53a">Y</text>
          </svg>
          <button class="shade" aria-label="View options"><svg class="s20" viewBox="0 0 20 20"><path d="M10 1l9 4v10l-9 4-9-4V5z" fill="#ccc"/><path d="M1 5l9 4 9-4-9-4z" fill="#fff" stroke="#777"/><path d="M1.500 5.500L10 9v9.500l-8.500-4z" fill="#aaa" stroke="none"/></svg><svg class="s12"><use href="#tri"/></svg></button>
          <div class="sidebar">
            <button aria-label="Appearance"><svg viewBox="0 0 20 20"><path class="g" d="M3 13L9 1l5 3-5 10z" stroke="none"/><circle cx="16" cy="8" r="3.500" fill="#888" stroke="none"/><path d="M1 13h18v6H3q-2-1-2-3z" fill="#ddd" stroke="#888"/><path d="M7 13h6v6H7z" fill="#fff" stroke="#888"/></svg></button>
            <button class="blue" aria-label="Configurations"><svg viewBox="0 0 20 20"><path d="M12 4l7 3v8l-7 4-7-4V7zM5 7l7 4 7-4M12 11v8" fill="#fff" stroke="#333"/><use href="#grid" width="11" height="9"/></svg></button>
            <button aria-label="Part properties"><svg viewBox="0 0 20 20"><path d="M11 4l5 3v6l-5 3-5-3V7zM6 7l5 3 5-3M11 10v6M16 2q2 0 1 4t2.500 4Q17 10 18 14t-2 5M4 10q-3 0-2 0t1 4 1 5" fill="none"/><use href="#grid" width="11" height="9"/></svg></button>
            <button aria-label="Variables"><svg viewBox="0 0 20 20"><use href="#variable" y="2" width="20" height="17"/><use href="#grid" width="11" height="9"/></svg></button>
          </div>
          <div class="measure">
            <button class="plain" aria-label="Measure"><svg class="s20" viewBox="0 0 20 20"><path d="M2 10h6q-2-5 4-6 6 0 6 4v8H2z" fill="#eee" stroke-width="1.200"/><path d="M8 10h9" /><ellipse cx="12.500" cy="7" rx="3" ry="1.500" fill="#fff"/><path d="M5 16v-2M8 16v-2M11 16v-2M14 16v-2"/></svg></button>
            <button class="plain" aria-label="Protractor"><svg class="s20" viewBox="0 0 20 20"><path d="M1 16v-2a9 9 0 0 1 18 0v2z" fill="#ddd" stroke-width="1.300"/><path d="M5 14q0-5 5-5t5 5h-3q-2-2-4 0z" fill="#fff"/></svg></button>
            <button class="plain" aria-label="Mass properties"><svg class="s16" viewBox="0 0 16 16"><path d="M2 2h12M7 2v11M9 2v11M3 2L1 9h5zM13 2l-3 7h5z" fill="none"/><path d="M0 9.500h6M10 9.500h6M1 14.500h14" stroke-width="2"/></svg></button>
          </div>
        </section>
      </div>

      <footer class="tabs">
        <button class="plain add" aria-label="Add tab"><svg class="s16" viewBox="0 0 16 16"><path d="M8 1v14M1 8h14" stroke="#666" stroke-width="2.400"/></svg></button>
        <nav class="crumbs">
          <a href="#" class="home" aria-label="Home"><svg class="s20" viewBox="0 0 20 20"><path d="M0 10L10 1l4 3V2h3v5l3 3-1 1-1-1v9h-5v-6H8v6H2v-9l-1 1z" fill="#666" stroke="none"/></svg></a>
          <a href="#" class="mid"><svg><use href="#folder"/></svg>Outtake</a>
          <a href="#" class="cur">Parts Of Basket</a>
        </nav>
        <a href="#" class="tab"><svg><use href="#parts"/></svg><span>Top Cover Of Basket</span></a>
        <a href="#" class="tab"><svg><use href="#parts"/></svg><span>Bottom Cover Of Baske...</span></a>
        <a href="#" class="tab"><svg><use href="#parts"/></svg><span>Sides Of The Basket</span></a>
        <a href="#" class="tab"><svg><use href="#parts"/></svg><span>Part Studio 1</span></a>
        <a href="#" class="tab active"><svg><use href="#parts"/></svg><span>Hook For Rubber Bands</span></a>
      </footer>
    </div>
  </div>
</div>

<footer class="taskbar">
  <button aria-label="Start"><svg viewBox="0 0 24 24"><path d="M0 0h11.500v11.500H0zM12.500 0H24v11.500H12.500zM0 12.500h11.500V24H0zM12.500 12.500H24V24H12.500z" fill="url(#gWin)"/></svg></button>
  <button aria-label="File Explorer"><svg viewBox="0 0 24 24"><path d="M0 2q0-1 1-1h8l2 3H0z" fill="#d9920a"/><path d="M0 5l10-2h13q1 0 1 1v18H0z" fill="#ffcf48"/><path d="M4 16q0-1 1-1h13q1 0 1 1v6H4z" fill="#1b80d4"/><path d="M8 19h8v1.500H8z" fill="#0b56a0"/></svg></button>
  <button aria-label="Messenger"><svg viewBox="0 0 24 24"><path d="M12 0c7 0 12 5 12 11.500S19 23 12 23l-4-.6L4 24v-4Q0 17 0 11.500C0 5 5 0 12 0z" fill="url(#gMsg)"/><path d="M5 15l5-6 4 3 5-3-5 6-4-3z" fill="#fff" stroke="#fff"/></svg></button>
  <button class="running" aria-label="Chrome"><svg viewBox="0 0 24 24"><circle cx="12" cy="12" r="12" fill="#fbc116"/><path d="M12 12L1.600 6a12 12 0 0 1 20.800 0z" fill="#ea4335"/><path d="M12 12l0 12A12 12 0 0 1 1.600 6z" fill="#34a853"/><path d="M12 12l5 3-5 9h-1z" fill="#fbc116"/><circle cx="12" cy="12" r="5.800" fill="#fff"/><circle cx="12" cy="12" r="4.500" fill="#1a73e8"/></svg></button>
  <button aria-label="Spotify"><svg viewBox="0 0 24 24"><circle cx="12" cy="12" r="12" fill="#1ed760"/><path d="M4.500 8q8-2.500 15 1.500M5.500 12q7-2 12.500 1.200M6.500 16q5.500-1.500 10 1" fill="none" stroke="#141414" stroke-width="2.200" stroke-linecap="round"/></svg></button>
  <button aria-label="Discord"><svg viewBox="0 0 24 24"><circle cx="12" cy="12" r="12" fill="#5865f2"/><path d="M6 8q2-1.500 4-1.500l.6 1h2.800l.6-1q2 0 4 1.500 2 4 2 8-2 1.500-4 1.500l-1-1.500H9l-1 1.500Q6 17.500 4 16q0-4 2-8z" fill="#fff"/><circle cx="9.300" cy="12.500" r="1.700" fill="#5865f2"/><circle cx="14.700" cy="12.500" r="1.700" fill="#5865f2"/></svg></button>
  <button aria-label="Signal"><svg viewBox="0 0 24 24"><circle cx="12" cy="12" r="12" fill="#3a76f0"/><path d="M12 5a7 7 0 1 1-3.500 13L5 19l1-3.500A7 7 0 0 1 12 5z" fill="#fff"/><circle cx="12" cy="12" r="8.300" fill="none" stroke="#fff" stroke-dasharray="3 1"/></svg></button>
  <button aria-label="PowerToys"><svg viewBox="0 0 24 24"><path d="M1 1h22v22H1z" fill="#6b6862" stroke="#ddd5c5" stroke-width="1.500"/><path d="M5 4h4v9H5z" fill="#f25022"/><path d="M9 4h3v10H9z" fill="#ffb900"/><path d="M12 4h4v9h-4z" fill="#5cc000"/><path d="M16 4h3v9h-3z" fill="#00a4ef"/><path d="M5 16h4v3H5zM10 16h4v3h-4zM15 16h4v3h-4z" fill="#e9dfca"/></svg></button>
  <button aria-label="Lighting control"><svg viewBox="0 0 24 24" fill="none"><path d="M12 .7l10 5.600v11.400l-10 5.600-10-5.600V6.300z" fill="#0c0c0c" stroke="#ddd"/><g stroke-width="2"><path d="M12 4l7 4" stroke="#e8c818"/><path d="M19 8v8" stroke="#2fc04a"/><path d="M19 16l-7 4" stroke="#12a8e0"/><path d="M12 20l-7-4" stroke="#6040e8"/><path d="M5 16V8" stroke="#e028c8"/><path d="M5 8l7-4" stroke="#ee3030"/></g><circle cx="12" cy="12" r="4.500" stroke="#fff" stroke-width="1.800"/><path d="M12 8v5" stroke="#fff" stroke-width="1.800"/></svg></button>
  <button aria-label="REV client"><svg viewBox="0 0 24 24"><path d="M9 1l5 13-12 8zM14 14l9 3-10 5-11 0M9 1l6 8-3 8 3 5M2 22l7-10 14 5" fill="none" stroke="#c4161c" stroke-width="1.500"/></svg></button>
  <button aria-label="WhatsApp"><svg viewBox="0 0 24 24"><path d="M12 1.200A10.700 10.700 0 1 1 6.500 21L1.300 22.700 3 17.500A10.700 10.700 0 0 1 12 1.200z" fill="none" stroke="#25d366" stroke-width="2.200"/><path d="M8 6l2 4-1.500 2q1.500 2.500 4 3.500L14.500 14l3.500 2q-1 3-4 2.500Q7 16 6 9.500 6 7 8 6z" fill="#25d366"/></svg></button>
  <button aria-label="Firefox"><svg viewBox="0 0 24 24"><path d="M2 7q1-3 2-3v3q3-2 4-6l2 4q3 1 4 0 0-3 2-5 7 5 8 12 0 12-12 12T0 13q0-4 2-6z" fill="url(#gFox)"/><circle cx="12" cy="13" r="5.500" fill="#8a3ad8"/><path d="M5 9q5 0 7 3-4 0-4 3-4-2-3-6z" fill="#ff9a1e"/></svg></button>
  <div class="tray">
    <button aria-label="Show hidden icons"><svg viewBox="0 0 14 14"><path d="M2 9l5-5 5 5" fill="none" stroke="#fff" stroke-width="1.500"/></svg></button>
    <span class="lang">ENG</span>
    <svg viewBox="0 0 18 18" fill="none" stroke="#fff" stroke-width="1.200"><path d="M11 2H2v11h13V9M8.500 13v3M5 16h7M13 1h4v4h-4zM15 5v4q0 3 0 7"/></svg>
    <svg viewBox="0 0 18 18" fill="none" stroke="#fff" stroke-width="1.200"><path d="M2 7h3l4-4v12l-4-4H2z"/><path d="M11 7q1.500 2 0 4"/><path d="M13 5q3 4 0 8M15 3q4 6 0 12" stroke="#777"/></svg>
    <p class="time">1:14 PM<br>7/2/2024</p>
    <svg viewBox="0 0 18 18"><path d="M1 14l2-3V7q0-6 6-6t6 6v4l2 3zM6.500 15h5q-2.500 3-5 0z" fill="#8be4ff"/></svg>
  </div>
</footer>
</body>
</html>
```
FILE: styles.css
```css
* { box-sizing: border-box; }
body { margin: 0; height: 100vh; display: flex; flex-direction: column; overflow: hidden; font: 14px/20px Roboto, "Liberation Sans", sans-serif; color: #333; }
button, input { font: inherit; color: inherit; }
button { padding: 0; border: 0; background: none; display: flex; align-items: center; justify-content: center; }
a { color: inherit; text-decoration: none; }
h1, h2, p, ul { margin: 0; padding: 0; }
ul { list-style: none; }
svg { display: block; flex: none; stroke: #333; }
svg[stroke="none"], .taskbar svg { stroke: none; }
.taskbar svg[fill="none"] { stroke: #fff; }
.defs { position: absolute; width: 0; height: 0; }
.g { fill: #999; }
.s12 { width: 12px; height: 12px; }
.s16 { width: 16px; height: 16px; }
.s20 { width: 20px; height: 20px; }

/* Browser frame */
.browser { background: #333; color: #eee; height: 121px; border-bottom: 1px solid #555; font: 12px/16px Roboto, "Open Sans", sans-serif; }
.browser svg { stroke: #eee; }
.tabstrip { display: flex; align-items: center; height: 40px; padding: 0 17px 0 14px; }
.tabsearch { margin-right: 15px; }
.btab { display: flex; align-items: center; width: 231px; height: 28px; padding: 0 9px 0 7px; gap: 8px; border-radius: 9px; }
.btab.dark { background: #1a1a1a; color: #ddd; margin: 0 7px 0 6px; }
.bt { flex: 1; white-space: nowrap; overflow: hidden; mask-image: linear-gradient(to right, #000 88%, transparent); margin-right: 4px; }
.newtab { width: 28px; height: 28px; border-radius: 14px; background: #1a1a1a; }
.winctl { margin-left: auto; display: flex; gap: 34px; }
.urlrow { display: flex; align-items: center; height: 46px; padding: 0 14px 0 14px; }
.nav { width: 16px; margin-right: 20px; }
.nav.dim { opacity: .5; }
.urlbar { flex: 1; display: flex; align-items: center; height: 34px; border-radius: 17px; background: #1a1a1a; padding: 0 16px 0 5px; margin: 0 16px 0 -2px; }
.site { width: 24px; height: 24px; border-radius: 12px; background: #333; margin-right: 8px; }
.url { flex: 1; font-size: 14px; color: #888; white-space: nowrap; overflow: hidden; }
.url b { font-weight: 400; color: #fff; }
.bsep { width: 2px; height: 16px; background: #1a1a1a; }
.urlrow .bsep { margin: 0 18px 0 16px; }
.profile { width: 20px; height: 20px; border-radius: 10px; background: #455a64; font-size: 11px; margin: 0 18px; }
.bookmarks { display: flex; align-items: center; gap: 15px; height: 28px; padding: 0 15px 0 12px; white-space: nowrap; }
.bookmarks a { display: flex; align-items: center; gap: 6px; }
.bookmarks .group { background: #574a2c; color: #fbeeb0; border-radius: 6px; padding: 2px 6px; }
.group + .bsep { margin: 0 2px; }
.fold { margin-right: 2px; stroke: #aaa !important; }
.more { margin-left: auto; }

/* Document header */
.app { flex: 1; display: flex; flex-direction: column; min-height: 0; background: #fafafa; }
.dochead { display: flex; align-items: center; height: 40px; padding: 0 4px; }
.logo { display: flex; align-items: center; gap: 6px; width: 109px; font: 19px/24px Lato, sans-serif; color: #666; }
.logo svg { width: 20px; height: 26px; }
h1 { font-size: 22px; line-height: 28px; font-weight: 700; margin: 2px 10px 0 12px; }
.branch { font-size: 16px; color: #999; padding-top: 6px; margin-right: 10px; }
.link { margin-right: 32px; }
.headright { margin-left: auto; display: flex; align-items: center; gap: 12px; }
.bell { position: relative; }
.bell em { position: absolute; left: 9px; top: -5px; background: #1651b0; color: #fff; font: 700 12px/16px Roboto, sans-serif; padding: 0 5px; border-radius: 2px; }
.gray svg { stroke: #666; }
.share { width: 60px; height: 33px; border-radius: 4px; background: #1651b0; color: #fff; font-size: 16px; font-weight: 500; margin-left: -2px; }
.help { gap: 4px; margin-right: -2px; }
.help b { width: 18px; height: 18px; border-radius: 9px; background: #666; color: #fff; line-height: 18px; }
.user { gap: 6px; }
.user svg:first-child { width: 24px; height: 24px; }

/* Work area */
.work { flex: 1; display: flex; min-height: 0; }
.rail { width: 40px; border-right: 1px solid #ccc; border-top: 1px solid #ccc; display: flex; flex-direction: column; align-items: center; gap: 15px; padding: 7px 0; }
.rail svg { width: 20px; height: 20px; }
.rail hr { width: 100%; border: 0; border-top: 1px solid #ccc; margin: -4px 0 -10px; }
.find { margin-top: auto; }
.studio { flex: 1; min-width: 0; display: flex; flex-direction: column; }
.toolbar { display: flex; align-items: center; height: 36px; background: #fff; border-bottom: 1px solid #e4e9ed; }
.toolbar button { width: 34px; height: 34px; flex: none; }
.toolbar button svg { width: 20px; height: 20px; }
.toolbar i { flex: none; width: 2px; height: 26px; background: #d8d8d8; margin: 0 1px; }
.toolbar .dd { width: 18px; }
.toolbar .dd svg { width: 12px; height: 12px; }
.toolbar .sketch { width: 85px; gap: 4px; }
.custom { position: relative; }
.custom span { width: 20px; height: 20px; border: 1px solid #888; border-radius: 3px; font-size: 11px; line-height: 18px; text-align: left; }
.toolbar .custom svg { width: 12px; height: 12px; position: absolute; right: 3px; top: 7px; }
.toolbar .search { width: 160px; height: 32px; border-radius: 3px; background: #ededed; margin-left: 11px; justify-content: flex-start; padding: 0 9px; white-space: nowrap; }
kbd { font: 11px/15px Roboto, sans-serif; border: 1px solid #aaa; border-bottom-width: 2px; border-radius: 2px; background: #f3f3f3; padding: 0 4px; }
.search span { margin-right: 4px; }
.main { flex: 1; display: flex; min-height: 0; }
.panel { width: 206px; background: #fff; border-right: 1px solid #ccc; border-bottom: 1px solid #ccc; display: flex; flex-direction: column; padding: 6px 4px 0 4px; }
.phead { display: flex; align-items: center; gap: 10px; padding-right: 16px; height: 22px; }
.phead h2 { flex: 1; font-size: 13px; line-height: 20px; font-weight: 500; }
.pfilter { display: flex; align-items: center; gap: 12px; padding: 3px 4px 0 7px; }
.pfilter input { flex: 1; min-width: 0; height: 30px; border: 1px solid #aaa; border-radius: 3px; padding: 0 6px; font-size: 13px; font-style: italic; outline: 0; }
.pfilter input::placeholder { color: #777; }
.tree li { line-height: 26px; white-space: nowrap; }
.tree li svg { display: inline-block; width: 16px; height: 16px; vertical-align: middle; margin: -3px 5px 0 1px; }
.tree ul li svg { margin-right: 4px; }
.tree .head > svg { width: 12px; height: 12px; margin: -2px 7px 0 0; }
.tree li.head { color: #555; font-size: 13px; }
.tree ul { border-left: 1px solid #ccc; margin-left: 5px; padding-left: 14px; color: #333; font-size: 14px; }
.parts ul { border-color: transparent; }
.tree li.soft { color: #555; }
.tree .off { color: #aaa; }
.tree .off svg { opacity: .45; }
.rollback { height: 7px; margin: 10px 6px 0 1px; background: #c2c2c2; }
.parts { border-top: 1px solid #ccc; margin: 132px 0 0 -4px; padding: 0 0 0 4px; flex: 1; }

/* Graphics area */
.canvas { flex: 1; position: relative; min-width: 0; }
.scene { position: absolute; width: 100%; height: 100%; }
.toggle { position: absolute; left: -1px; top: 377px; width: 33px; height: 34px; background: #fff; border: 1px solid #aaa; border-left: 0; }
.toggle svg { width: 20px; height: 20px; }
.viewcube { position: absolute; right: 0; top: 0; width: 170px; height: 183px; font-family: Roboto, sans-serif; }
.shade { position: absolute; right: 15px; top: 142px; width: 44px; height: 28px; gap: 5px; background: #f9fbfd; border-radius: 3px; }
.sidebar { position: absolute; right: 0; top: 328px; width: 32px; border: 1px solid #aaa; border-right: 0; background: #fff; }
.sidebar button { width: 100%; height: 33px; }
.sidebar button + button { border-top: 1px solid #aaa; }
.sidebar svg { width: 20px; height: 20px; }
.sidebar .blue svg { stroke: #1651b0; }
.measure { position: absolute; right: 0; bottom: 0; width: 110px; height: 30px; background: #fbfcfe; display: flex; align-items: center; justify-content: space-between; padding: 0 12px 0 10px; }

/* Document tabs */
.tabs { display: flex; height: 30px; background: #d6d6d6; color: #666; }
.add { width: 34px; }
.crumbs { display: flex; height: 27px; margin-right: 1px; filter: drop-shadow(0 1px 1px #aaa); }
.crumbs a { display: flex; align-items: center; background: #e9e9e9; padding-bottom: 3px; margin-right: -7px; }
.home { padding: 0 13px 0 8px; clip-path: polygon(0 0, calc(100% - 9px) 0, 100% 50%, calc(100% - 9px) 100%, 0 100%); }
.mid, .cur { clip-path: polygon(0 0, calc(100% - 9px) 0, 100% 50%, calc(100% - 9px) 100%, 0 100%, 9px 50%); }
.mid { width: 112px; gap: 5px; padding-left: 17px; }
.mid svg { width: 20px; height: 18px; }
.crumbs .cur { width: 136px; background: #fff; padding-left: 21px; margin-right: 0; }
.tab { display: flex; align-items: center; gap: 4px; width: 200px; height: 27px; margin-right: 2px; padding: 0 11px; background: #e9e9e9; border-radius: 0 0 4px 4px; box-shadow: 0 1px 1px #aaa; white-space: nowrap; }
.tab svg { width: 18px; height: 22px; }
.tab.active { background: #fff; color: #333; border-bottom: 2px solid #1651b0; }

/* System taskbar */
.taskbar { display: flex; align-items: center; height: 48px; background: #1c1c1c; border-top: 1px solid #3a3a3a; padding: 0 18px 0 13px; gap: 4px; color: #fff; }
.taskbar > button { width: 40px; height: 40px; border-radius: 4px; position: relative; }
.taskbar > button svg { width: 24px; height: 24px; }
.running { background: #2c2c2c; }
.running::after { content: ""; position: absolute; left: 12px; right: 12px; bottom: 0; height: 3px; border-radius: 2px; background: #4cc2ff; }
.tray { margin-left: auto; display: flex; align-items: center; gap: 6px; font: 12px/16px "Open Sans", "Noto Sans", sans-serif; }
.tray svg { width: 18px; height: 18px; }
.tray button svg { width: 14px; height: 14px; }
.lang { margin: 0 12px 0 12px; }
.time { text-align: right; width: 58px; }
```
